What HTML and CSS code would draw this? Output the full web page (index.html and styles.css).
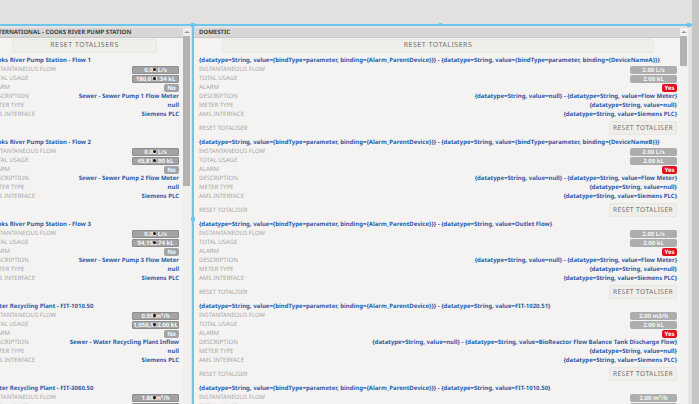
FILE: index.html
```html
<!DOCTYPE html>
<html lang="en">
<head>
  <meta charset="UTF-8">
  <title>Totalisers</title>
  <link rel="stylesheet" href="styles.css">
</head>
<body>
  <div class="main">
    <div class="top-band"></div>
    <div class="panels">
      <section class="panel panel-left">
        <div class="panel-content">
          <h3 class="panel-head">INTERNATIONAL - COOKS RIVER PUMP STATION</h3>
          <div class="panel-body">
            <button class="btn btn-wide">RESET TOTALISERS</button>
            <div id="leftList"></div>
          </div>
        </div>
        <div class="scrollbar"><span class="arrow"></span><div class="thumb thumb-left"></div></div>
      </section>
      <section class="panel panel-right">
        <div class="panel-content">
          <h3 class="panel-head">DOMESTIC</h3>
          <div class="panel-body">
            <button class="btn btn-wide">RESET TOTALISERS</button>
            <div id="rightList"></div>
          </div>
        </div>
        <div class="scrollbar"><span class="arrow"></span><div class="thumb thumb-right"></div></div>
        <!-- selection handles -->
        <i class="handle handle-tl"></i>
        <i class="handle handle-tm"></i>
        <i class="handle handle-tr"></i>
        <i class="handle handle-ml"></i>
      </section>
    </div>
  </div>
  <div class="edge"></div>
  <script src="app.js"></script>
</body>
</html>
```

FILE: styles.css
```css
* {
  box-sizing: border-box;
}
html, body {
  margin: 0;
  height: 100%;
  overflow: hidden;
}
body {
  background: #e2e1e0;
  font-family: "Noto Sans", "Open Sans", sans-serif;
  text-rendering: geometricPrecision;
  display: flex;
}
.main {
  width: 692px;
  flex: none;
  display: flex;
  flex-direction: column;
}
.edge {
  flex: 1;
  background: #c6c6c6;
}
.top-band {
  height: 24px;
  flex: none;
}
.panels {
  flex: 1;
  display: flex;
  gap: 1px;
  margin-left: -54px;
  min-height: 0;
  border-top: 2px solid #6ec6ec;
}
.panel {
  display: flex;
  padding-top: 2px;
  min-width: 0;
  background: #e6e5e4;
  position: relative;
}
.panel-left {
  width: 245px;
}
.panel-right {
  width: 499px;
  border-left: 2px solid #6ec6ec;
  padding-right: 3px;
}
.panel-content {
  flex: 1;
  min-width: 0;
  display: flex;
  flex-direction: column;
  background: #f4f3f2;
}
.panel-head {
  margin: 0;
  height: 10px;
  flex: none;
  padding-left: 45px;
  background: #d8d7d6;
  border-bottom: 1px solid #c8c7c6;
  color: #444;
  font-size: 6px;
  line-height: 9px;
  font-weight: 700;
  white-space: nowrap;
  overflow: hidden;
}
.panel-right .panel-head {
  padding-left: 5px;
}
.panel-body {
  flex: 1;
  min-height: 0;
  overflow: hidden;
  padding: 0 4px 0 44px;
}
.panel-right .panel-body {
  padding: 0 3px 0 5px;
}
.btn {
  display: block;
  border: 1px solid #e8e7e5;
  border-radius: 2px;
  background: #efeee9;
  color: #727272;
  font-family: inherit;
  text-rendering: geometricPrecision;
  padding: 0;
}
.btn-wide {
  width: 145px;
  height: 14px;
  margin: 1px 0 0 22px;
  line-height: 12px;
  font-size: 7px;
  letter-spacing: 0.5px;
}
.panel-right .btn-wide {
  width: 432px;
  margin-left: 23px;
}
.device {
  height: 82px;
}
.device-title {
  height: 12px;
  padding-top: 3px;
  color: #2f5ba8;
  font-size: 6px;
  line-height: 9px;
  font-weight: 700;
  white-space: nowrap;
}
.row {
  height: 9px;
  display: flex;
  justify-content: space-between;
  align-items: center;
  color: #a8a8a8;
  font-size: 6px;
  line-height: 9px;
  white-space: nowrap;
  position: relative;
}
.row-value {
  color: #2f5ba8;
  font-weight: 700;
}
.pill {
  display: block;
  width: 47px;
  height: 8px;
  line-height: 8px;
  border-radius: 2px;
  background: #adadad;
  color: #f6f6f6;
  font-weight: 700;
  text-align: center;
}
.panel-left .pill {
  background: #a3a3a3;
  border: 1px solid #8e8e8e;
  border-radius: 1px;
  line-height: 6px;
}
.panel-left .pill-short,
.pill-short {
  width: 15px;
  border: 0;
  border-radius: 2px;
  line-height: 8px;
}
.pill-alarm {
  background: #e2101c;
  color: #fff;
}
.row-reset {
  height: 14px;
  margin-top: 2px;
}
.btn-small {
  width: 68px;
  height: 14px;
  line-height: 12px;
  font-size: 6.5px;
  letter-spacing: 0.5px;
}
.cursor-dot {
  position: absolute;
  left: 163px;
  top: 3px;
  width: 3px;
  height: 3px;
  border-radius: 50%;
  background: #111;
}
.scrollbar {
  flex: none;
  width: 8px;
  background: #f0efee;
}
.panel-right .scrollbar {
  background: #f2f1f0;
}
.arrow {
  display: block;
  width: 6px;
  margin: 3px 0 3px 1px;
  border: 2px solid transparent;
  border-left-width: 3px;
  border-right-width: 3px;
  border-top: 0;
  border-bottom: 2px solid #9a9a9a;
}
.thumb {
  width: 7px;
  background: #b4b3b2;
}
.thumb-left {
  height: 150px;
}
.thumb-right {
  height: 30px;
}
.handle {
  position: absolute;
  width: 4px;
  height: 4px;
  background: #6ec6ec;
}
.handle-tl {
  left: -3px;
  top: -3px;
}
.handle-tm {
  left: 245px;
  top: -3px;
  width: 3px;
  height: 3px;
}
.handle-tr {
  right: 0;
  top: -3px;
}
.handle-ml {
  left: -3px;
  top: 191px;
}
```

FILE: app.js
```js
var d = function (v) { return '{datatype=String, value=' + v + '}'; };
var bound = function (b) { return d('{bindType=parameter, binding={' + b + '}}'); };

var left = [
  { t: 'Cooks River Pump Station - Flow 1', flow: '0.00 L/s', use: '180,611.34 kL', desc: 'Sewer - Sewer Pump 1 Flow Meter' },
  { t: 'Cooks River Pump Station - Flow 2', flow: '0.00 L/s', use: '45,817.90 kL', desc: 'Sewer - Sewer Pump 2 Flow Meter' },
  { t: 'Cooks River Pump Station - Flow 3', flow: '0.00 L/s', use: '94,152.74 kL', desc: 'Sewer - Sewer Pump 3 Flow Meter' },
  { t: 'Water Recycling Plant - FIT-1010.50', flow: '0.59 m\u00b3/h', use: '1,056,512.00 kL', desc: 'Sewer - Water Recycling Plant Inflow' },
  { t: 'Water Recycling Plant - FIT-3060.50', flow: '1.86 m\u00b3/h', use: '', desc: '' }
];

var right = [
  { name: bound('DeviceNameA'), flow: '2.00 L/s', desc: d('Flow Meter') },
  { name: bound('DeviceNameB'), flow: '2.00 L/s', desc: d('Flow Meter') },
  { name: d('Outlet Flow'), flow: '2.00 L/s', desc: d('Flow Meter') },
  { name: d('FIT-1020.51'), flow: '2.00 m3/h', desc: d('BioReactor Flow Balance Tank Discharge Flow') },
  { name: d('FIT-1010.50'), flow: '2.00 m\u00b3/h', desc: d('') }
];

function row(label, value, dot) {
  return '<div class="row"><span>' + label + '</span>' + value + (dot ? '<i class="cursor-dot"></i>' : '') + '</div>';
}
function pill(text, cls) {
  return '<span class="pill ' + (cls || '') + '">' + text + '</span>';
}
function val(text) {
  return '<span class="row-value">' + text + '</span>';
}

document.getElementById('leftList').innerHTML = left.map(function (x) {
  return '<div class="device"><div class="device-title">' + x.t + '</div>' +
    row('INSTANTANEOUS FLOW', pill(x.flow), true) +
    row('TOTAL USAGE', pill(x.use), true) +
    row('ALARM', pill('No', 'pill-short')) +
    row('DESCRIPTION', val(x.desc)) +
    row('METER TYPE', val('null')) +
    row('AMS INTERFACE', val('Siemens PLC')) +
    '</div>';
}).join('');

document.getElementById('rightList').innerHTML = right.map(function (x) {
  return '<div class="device"><div class="device-title">' + bound('Alarm_ParentDevice') + ' - ' + x.name + '</div>' +
    row('INSTANTANEOUS FLOW', pill(x.flow)) +
    row('TOTAL USAGE', pill('2.00 kL')) +
    row('ALARM', pill('Yes', 'pill-short pill-alarm')) +
    row('DESCRIPTION', val(d('null') + ' - ' + x.desc)) +
    row('METER TYPE', val(d('null'))) +
    row('AMS INTERFACE', val(d('Siemens PLC'))) +
    '<div class="row row-reset"><span>RESET TOTALISER</span><button class="btn btn-small">RESET TOTALISER</button></div>' +
    '</div>';
}).join('');
```
